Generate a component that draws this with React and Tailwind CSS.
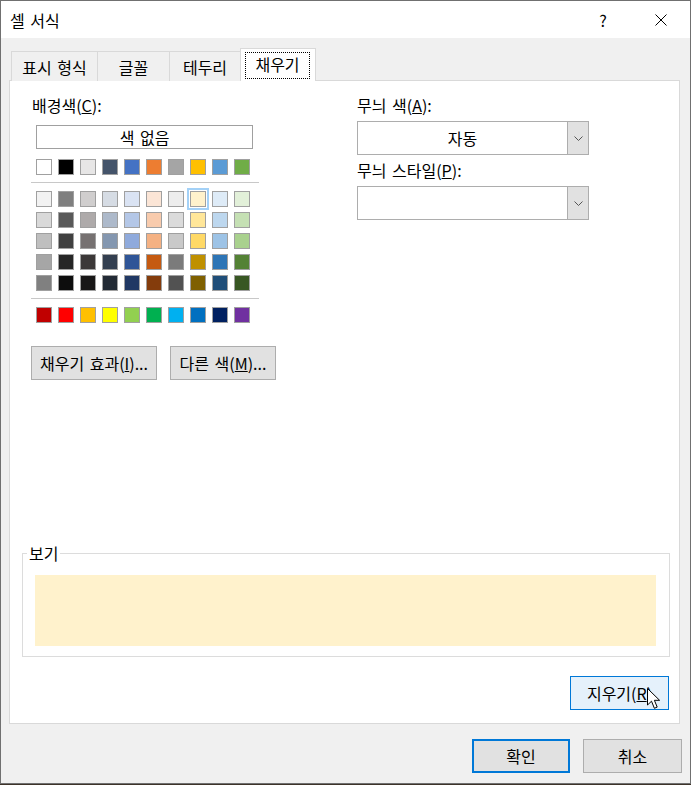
import React from 'react';

const theme = ['bg-[#ffffff]','bg-[#000000]','bg-[#e7e6e6]','bg-[#44546a]','bg-[#4472c4]','bg-[#ed7d31]','bg-[#a5a5a5]','bg-[#ffc000]','bg-[#5b9bd5]','bg-[#70ad47]'];
const tints = [
  ['bg-[#f2f2f2]','bg-[#7f7f7f]','bg-[#d0cece]','bg-[#d6dce4]','bg-[#dae3f3]','bg-[#fbe5d6]','bg-[#ededed]','bg-[#fff2cc]','bg-[#deebf7]','bg-[#e2f0d9]'],
  ['bg-[#d9d9d9]','bg-[#595959]','bg-[#aeaaaa]','bg-[#adb9ca]','bg-[#b4c7e7]','bg-[#f8cbad]','bg-[#dbdbdb]','bg-[#ffe699]','bg-[#bdd7ee]','bg-[#c5e0b4]'],
  ['bg-[#bfbfbf]','bg-[#404040]','bg-[#767171]','bg-[#8497b0]','bg-[#8faadc]','bg-[#f4b183]','bg-[#c9c9c9]','bg-[#ffd966]','bg-[#9dc3e6]','bg-[#a9d18e]'],
  ['bg-[#a6a6a6]','bg-[#262626]','bg-[#3b3838]','bg-[#333f50]','bg-[#2f5597]','bg-[#c55a11]','bg-[#7b7b7b]','bg-[#bf9000]','bg-[#2e75b6]','bg-[#548235]'],
  ['bg-[#808080]','bg-[#0d0d0d]','bg-[#181717]','bg-[#222a35]','bg-[#203864]','bg-[#843c0c]','bg-[#525252]','bg-[#7f6000]','bg-[#1f4e79]','bg-[#385723]'],
];
const standard = ['bg-[#c00000]','bg-[#ff0000]','bg-[#ffc000]','bg-[#ffff00]','bg-[#92d050]','bg-[#00b050]','bg-[#00b0f0]','bg-[#0070c0]','bg-[#002060]','bg-[#7030a0]'];

function Swatch({ c, sel }) {
  return (
    <div
      className={`w-4 h-4 border border-[#a0a0a0] ${c} ${sel ? 'outline-2 outline-[#a3d1f7] outline-offset-1' : ''}`}
    />
  );
}

function Chevron() {
  return (
    <svg width="9" height="5" viewBox="0 0 9 5">
      <polyline points="0.5,0.5 4.5,4.5 8.5,0.5" fill="none" stroke="#555" strokeWidth="1" />
    </svg>
  );
}

function Combo({ children }) {
  return (
    <div className="flex h-[34px] w-[232px] border border-[#adadad] bg-white">
      <div className="flex-1 flex items-center justify-center">{children}</div>
      <div className="w-[21px] bg-[#e1e1e1] border-l border-[#adadad] flex items-center justify-center">
        <Chevron />
      </div>
    </div>
  );
}

export default function App() {
  return (
    <div className="w-[691px] h-[785px] bg-[#3d3329] font-['Noto_Sans_CJK_KR','Noto_Sans',sans-serif] text-[16px] leading-[20px] text-black [word-spacing:2px]">
      <div className="w-[691px] h-[784px] border border-[#707070] bg-[#f0f0f0] flex flex-col">
        {/* Title bar */}
        <div className="h-[37px] bg-white flex items-center pl-[9px] shrink-0">
          <span>셀 서식</span>
          <div className="ml-auto flex h-full">
            <div className="w-[58px] h-full flex items-center justify-center">?</div>
            <div className="w-[58px] h-full flex items-center justify-center">
              <svg width="12" height="12" viewBox="0 0 12 12">
                <path d="M0.5 0.5 L11.5 11.5 M11.5 0.5 L0.5 11.5" stroke="#000" strokeWidth="1" />
              </svg>
            </div>
          </div>
        </div>

        {/* Tabs */}
        <div className="mt-[10px] ml-[10px] flex items-end h-[33px] -mb-px relative z-10">
          <div className="w-[86px] h-[30px] border-t border-l border-[#d9d9d9] bg-[#f0f0f0] flex items-center justify-center whitespace-nowrap">표시 형식</div>
          <div className="w-[72px] h-[30px] border-t border-l border-[#d9d9d9] bg-[#f0f0f0] flex items-center justify-center">글꼴</div>
          <div className="w-[71px] h-[30px] border-t border-l border-[#d9d9d9] bg-[#f0f0f0] flex items-center justify-center">테두리</div>
          <div className="w-[76px] h-[33px] border-t border-x border-[#d9d9d9] bg-white">
            <div className="mt-[3px] ml-[4px] w-[65px] h-[27px] border border-dotted border-black flex items-center justify-center pb-[4px]">채우기</div>
          </div>
        </div>

        {/* Panel */}
        <div className="ml-[8px] w-[671px] h-[644px] border border-[#d9d9d9] bg-white flex flex-col shrink-0">
          <div className="flex pt-[14px]">
            {/* Left column */}
            <div className="ml-[21px] w-[245px] flex flex-col">
              <div className="h-[20px] pl-[1px]">배경색(<span className="underline">C</span>):</div>
              <div className="mt-[10px] ml-[5px] w-[217px] h-[24px] border border-[#a0a0a0] flex items-center justify-center">색 없음</div>
              <div className="mt-[10px] ml-[5px] flex gap-[6px]">
                {theme.map((c, i) => <Swatch key={i} c={c} />)}
              </div>
              <div className="mt-[7px] h-px w-[228px] bg-[#c8c8c8]" />
              <div className="mt-[8px] ml-[5px] flex flex-col gap-[5px]">
                {tints.map((row, r) => (
                  <div key={r} className="flex gap-[6px]">
                    {row.map((c, i) => <Swatch key={i} c={c} sel={r === 0 && i === 7} />)}
                  </div>
                ))}
              </div>
              <div className="mt-[7px] h-px w-[228px] bg-[#c8c8c8]" />
              <div className="mt-[8px] ml-[5px] flex gap-[6px]">
                {standard.map((c, i) => <Swatch key={i} c={c} />)}
              </div>
              <div className="mt-[23px] flex gap-[13px]">
                <div className="w-[126px] h-[34px] bg-[#e1e1e1] border border-[#adadad] flex items-center justify-center whitespace-nowrap">채우기 효과(<span className="underline">I</span>)...</div>
                <div className="w-[106px] h-[34px] bg-[#e1e1e1] border border-[#adadad] flex items-center justify-center whitespace-nowrap">다른 색(<span className="underline">M</span>)...</div>
              </div>
            </div>

            {/* Right column */}
            <div className="ml-[81px] flex flex-col">
              <div className="h-[20px]">무늬 색(<span className="underline">A</span>):</div>
              <div className="mt-[6px]"><Combo>자동</Combo></div>
              <div className="mt-[5px] h-[20px]">무늬 스타일(<span className="underline">P</span>):</div>
              <div className="mt-[6px]"><Combo /></div>
            </div>
          </div>

          {/* Preview */}
          <div className="mt-[173px] ml-[12px] w-[648px] h-[104px] border border-[#dcdcdc] relative pt-[21px] pl-[12px] pr-[13px]">
            <div className="absolute left-[4px] top-[-11px] px-[2px] bg-white">보기</div>
            <div className="h-[71px] w-full bg-[#fff2cc]" />
          </div>

          <div className="mt-[19px] flex justify-end pr-[10px]">
            <div className="relative w-[99px] h-[34px] bg-[#e5f1fb] border border-[#0078d7] flex items-center justify-center whitespace-nowrap">
              지우기(<span className="underline">R</span>)
              <svg className="absolute left-[76px] top-[11px]" width="14" height="22" viewBox="0 0 14 22">
                <path d="M0.5 0.5 L0.5 17 L4.5 13.2 L7.4 20.3 L10.2 19.1 L7.4 12.3 L12.6 12.3 Z" fill="#fff" stroke="#000" strokeWidth="1" strokeLinejoin="miter" />
              </svg>
            </div>
          </div>
        </div>

        {/* Bottom buttons */}
        <div className="mt-[15px] flex justify-end gap-[13px] pr-[8px]">
          <div className="w-[98px] h-[34px] bg-[#e1e1e1] border-2 border-[#0078d7] flex items-center justify-center">확인</div>
          <div className="w-[99px] h-[34px] bg-[#e1e1e1] border border-[#adadad] flex items-center justify-center">취소</div>
        </div>
      </div>
    </div>
  );
}
